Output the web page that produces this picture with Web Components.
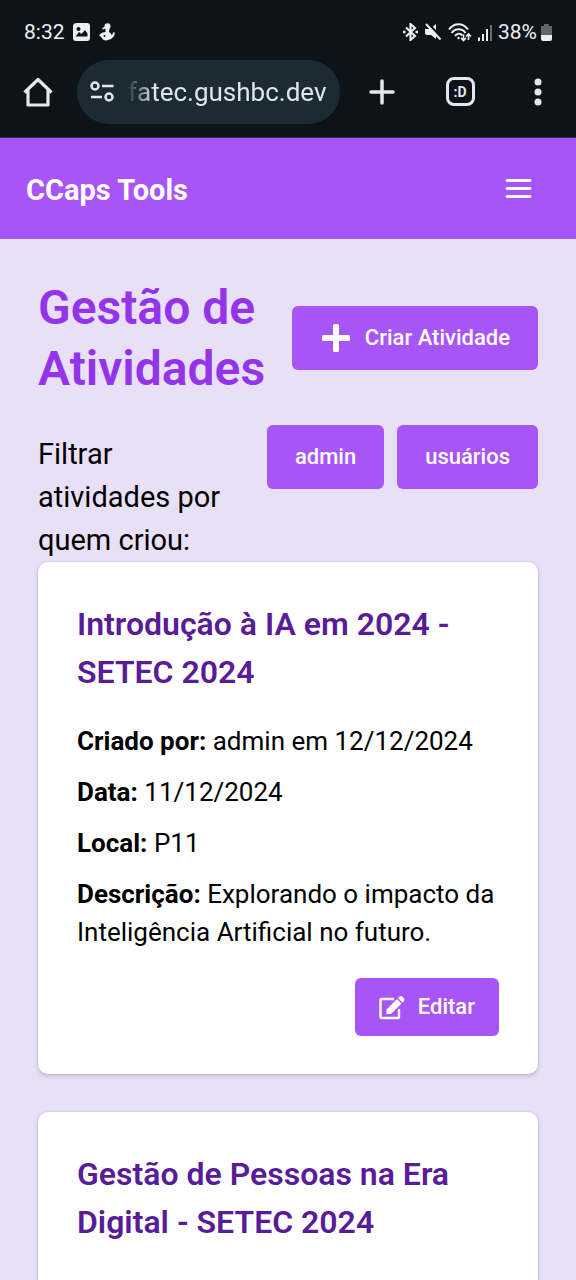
<!DOCTYPE html>
<html lang="pt-BR">
<head>
<meta charset="utf-8">
<meta name="viewport" content="width=device-width, initial-scale=1">
<title>CCaps Tools</title>
<style>
  body { margin: 0; background: #e8e0f7; font-family: Roboto, "Liberation Sans", sans-serif; color: #000; }
</style>
</head>
<body>
<phone-screen>
  <status-bar slot="chrome"></status-bar>
  <browser-toolbar slot="chrome" url="fatec.gushbc.dev"></browser-toolbar>
  <app-nav slot="chrome">CCaps Tools</app-nav>
  <page-heading>
    Gestão de Atividades
    <action-button slot="action" icon="plus">Criar Atividade</action-button>
  </page-heading>
  <filter-row>
    Filtrar atividades por quem criou:
    <action-button slot="options">admin</action-button>
    <action-button slot="options">usuários</action-button>
  </filter-row>
  <activity-list>
    <activity-card>
      <span slot="title">Introdução à IA em 2024 - SETEC 2024</span>
      <activity-field label="Criado por:">admin em 12/12/2024</activity-field>
      <activity-field label="Data:">11/12/2024</activity-field>
      <activity-field label="Local:">P11</activity-field>
      <activity-field label="Descrição:">Explorando o impacto da Inteligência Artificial no futuro.</activity-field>
      <action-button slot="action" icon="edit" compact>Editar</action-button>
    </activity-card>
    <activity-card>
      <span slot="title">Gestão de Pessoas na Era Digital - SETEC 2024</span>
    </activity-card>
  </activity-list>
</phone-screen>

<script>
const define = (name, html, setup) => {
  const template = document.createElement('template');
  template.innerHTML = html;
  customElements.define(name, class extends HTMLElement {
    constructor() {
      super();
      this.attachShadow({ mode: 'open' }).append(template.content.cloneNode(true));
    }
    connectedCallback() { if (setup) setup(this, this.shadowRoot); }
  });
};

define('phone-screen', `
  <style>
    :host { display: flex; flex-direction: column; height: 100vh; overflow: hidden; }
    header { flex: none; }
    main { flex: 1; min-height: 0; overflow-y: auto; scrollbar-width: none; padding: 38px; box-sizing: border-box; }
  </style>
  <header><slot name="chrome"></slot></header>
  <main><slot></slot></main>
`);

define('status-bar', `
  <style>
    :host { display: flex; align-items: center; justify-content: space-between; height: 60px; padding: 4px 24px 0;
      box-sizing: border-box; background: #0d1419; color: #edf0f2; font-size: 21px; line-height: 24px; }
    div { display: flex; align-items: center; gap: 7px; }
    svg { display: block; flex: none; }
    .end { gap: 5px; }
    .charge { display: flex; align-items: center; gap: 4px; }
  </style>
  <div>
    <span>8:32</span>
    <svg width="20" height="18" viewBox="0 0 20 18"><path fill="currentColor" fill-rule="evenodd" d="M5 0h10q3 0 3 3v12q0 3-3 3H4q-3 0-3-3V3q0-3 4-3zM6.500 4a2 2 0 1 0 .01 0zM3.500 13.500h12v-3L13 7l-3.500 4-2.500-2z"/></svg>
    <svg width="16" height="18" viewBox="0 0 16 18"><g fill="currentColor"><circle cx="8.500" cy="3.200" r="3"/><path d="M3 5.500l4-3 1 2.500-4.500 1.500zM6.500 5.500h4l-.5 3.500q2 1 2.500 3 1.500-.5 1.500-2.500l1.500-.5c1 4.500-3 8-8 8.500-3 0-4-1-5-3L0 12l3.500-2.500 3-.5z"/></g><circle cx="5.500" cy="13" r="1" fill="#0d1419"/></svg>
  </div>
  <div class="end">
    <svg width="17" height="18" viewBox="0 0 17 18" fill="none" stroke="currentColor" stroke-width="2.100"><path d="M4 4.500l9 8.500-4.500 4V1L13 5l-9 8.500"/><path d="M1 9h2.500M13.500 9H16" stroke-width="2.600"/></svg>
    <svg width="18" height="18" viewBox="0 0 18 18"><path fill="currentColor" d="M1 6h5l6-5v15l-5-4H3q-2 0-2-2z"/><path d="M4 0l14 15.500" stroke="#0d1419" stroke-width="2.200"/><path d="M2 1L16.500 16.500" stroke="currentColor" stroke-width="2"/></svg>
    <svg width="25" height="19" viewBox="0 0 25 19" fill="none" stroke="currentColor" stroke-width="2"><path d="M2 6.500C7-.5 16-.5 21 6.500M4.500 10c4-5 10.500-5 14 0M8 13c2-2.800 5.500-2.800 7.500-.5"/><circle cx="11.500" cy="15" r="1.200" fill="currentColor" stroke="none"/><path d="M16.500 11.500v6m-2.500-2.500l2.500 2.500 2.500-2.500M21.500 17v-6M19 13.500l2.500-2.500 2.500 2.500" stroke-width="1.600"/></svg>
    <svg width="16" height="17" viewBox="0 0 16 17" stroke="currentColor" stroke-width="2"><path d="M2 13.500V17M6 10V17M10 5V17"/><path d="M14 1V17" opacity=".4"/></svg>
    <div class="charge">
      <span>38%</span>
      <svg width="11" height="17" viewBox="0 0 11 17"><path fill="#60656a" d="M3 0h5v2h3v10H0V2h3z"/><path fill="currentColor" d="M0 11h11v4q0 2-2 2H2q-2 0-2-2z"/></svg>
    </div>
  </div>
`);

define('browser-toolbar', `
  <style>
    :host { display: flex; align-items: center; gap: 23px; height: 78px; padding: 0 22px 14px 22px; box-sizing: border-box;
      background: #0d1419; color: #e3e8ee; border-bottom: 1px solid #30303c; }
    button { display: grid; place-items: center; width: 32px; height: 32px; padding: 0; border: 0; background: none; color: inherit; font: inherit; }
    svg { display: block; flex: none; }
    label { flex: 1; min-width: 0; display: flex; align-items: center; gap: 12px; height: 64px; padding: 0 10px 0 13px;
      box-sizing: border-box; border-radius: 32px; background: #1c2a33; }
    input { flex: 1; min-width: 0; width: 0; padding: 0; border: 0; outline: 0; background: none; color: #dfe7ee;
      font: 26px "Roboto", sans-serif; -webkit-mask: linear-gradient(90deg, #0001, #000 26px); mask: linear-gradient(90deg, #0001, #000 26px); }
    nav { display: flex; gap: 46px; padding-left: 3px; }
    .tabs { display: grid; place-items: center; width: 29px; height: 29px; box-sizing: border-box; border: 3px solid; border-radius: 8px;
      font-size: 14px; line-height: 16px; font-weight: 700; }
  </style>
  <button aria-label="Início"><svg width="30" height="30" viewBox="0 0 30 30" fill="none" stroke="currentColor" stroke-width="3.200" stroke-linejoin="round"><path d="M1.500 15.500L15 2.500l13.500 13M5 13v15h20V13" /></svg></button>
  <label>
    <svg width="26" height="24" viewBox="0 0 26 24" fill="none" stroke="currentColor" stroke-width="2.500"><circle cx="5" cy="6" r="3.500"/><circle cx="19" cy="17" r="3.500"/><path d="M12 6h11.500M1 17h11"/></svg>
    <input type="text" aria-label="Endereço">
  </label>
  <nav>
    <button aria-label="Nova guia"><svg width="28" height="28" viewBox="0 0 28 28" stroke="currentColor" stroke-width="3.500" stroke-linecap="round"><path d="M14 3v22M3 14h22"/></svg></button>
    <button><span class="tabs">:D</span></button>
    <button aria-label="Menu"><svg width="8" height="28" viewBox="0 0 8 28" fill="currentColor"><circle cx="4" cy="4" r="3.500"/><circle cx="4" cy="14" r="3.500"/><circle cx="4" cy="24" r="3.500"/></svg></button>
  </nav>
`, (el, root) => { root.querySelector('input').value = el.getAttribute('url'); });

define('app-nav', `
  <style>
    :host { display: flex; align-items: center; justify-content: space-between; height: 101px; padding: 0 38px 0 26px;
      box-sizing: border-box; background: #a855f7; color: #fff; }
    a { color: inherit; text-decoration: none; padding-top: 3px; font-size: 29px; line-height: 43px; font-weight: 700; }
    button { display: grid; place-items: center; width: 38px; height: 38px; padding: 0; border: 0; background: none; color: inherit; }
    svg { display: block; }
  </style>
  <a href="#"><slot></slot></a>
  <button aria-label="Abrir menu"><svg width="38" height="38" viewBox="0 0 38 38" stroke="currentColor" stroke-width="2.800" stroke-linecap="round"><path d="M7 10.500h23M7 18.500h23M7 26.500h23"/></svg></button>
`);

define('page-heading', `
  <style>
    :host { display: flex; align-items: center; justify-content: space-between; gap: 16px; margin-bottom: 26px; }
    h1 { margin: 0; flex: 1; min-width: 0; color: #9333ea; font-size: 48px; line-height: 61px; font-weight: 600; }
  </style>
  <h1><slot></slot></h1>
  <slot name="action"></slot>
`);

define('filter-row', `
  <style>
    :host { display: flex; align-items: flex-start; justify-content: space-between; gap: 26px; }
    p { flex: 1; margin: 0; padding-top: 8px; font-size: 29px; line-height: 43px; }
    div { display: flex; gap: 13px; }
  </style>
  <p><slot></slot></p>
  <div><slot name="options"></slot></div>
`);

define('activity-list', `
  <style>
    :host { display: flex; flex-direction: column; gap: 38px; }
  </style>
  <slot></slot>
`);

define('activity-card', `
  <style>
    :host { display: block; padding: 38px 39px; background: #fff; border-radius: 10px;
      box-shadow: 0 2px 5px rgba(0, 0, 0, .16), 0 0 2px rgba(0, 0, 0, .12); }
    h2 { margin: 0 0 26px; color: #581c98; font-size: 32px; line-height: 48px; font-weight: 600; }
    .fields { display: flex; flex-direction: column; gap: 13px; }
    footer { display: flex; justify-content: flex-end; }
    ::slotted(action-button) { margin-top: 27px; }
  </style>
  <article>
    <h2><slot name="title"></slot></h2>
    <div class="fields"><slot></slot></div>
    <footer><slot name="action"></slot></footer>
  </article>
`);

define('activity-field', `
  <style>
    :host { display: block; font-size: 26px; line-height: 38px; }
    p { margin: 0; }
    b { font-weight: 700; }
  </style>
  <p><b></b> <slot></slot></p>
`, (el, root) => { root.querySelector('b').textContent = el.getAttribute('label'); });

const icons = {
  plus: '<svg width="32" height="32" viewBox="0 0 32 32" fill="currentColor"><rect x="13" y="2" width="6" height="28" rx="1.500"/><rect x="2" y="13" width="28" height="6" rx="1.500"/></svg>',
  edit: '<svg width="26" height="26" viewBox="0 0 26 26"><path d="M15 5H2.500q-1 0-1 1v17q0 1 1 1H19q1 0 1-1V15" fill="none" stroke="currentColor" stroke-width="2.400"/><path fill="currentColor" d="M7.500 15.500L18 5l4.500 4.500L12 20H7.500zM19 4l1.500-1.500q1.300-1 2.600 0l1.900 1.900q1 1.300 0 2.600L23.500 8.500z"/></svg>'
};

define('action-button', `
  <style>
    :host { display: block; flex: none; }
    button { display: flex; align-items: center; gap: 13px; height: 64px; padding: 0 28px; border: 0; border-radius: 6px;
      background: #a855f7; color: #fff; font: 500 22px/32px Roboto, "Liberation Sans", sans-serif; white-space: nowrap; }
    :host([compact]) button { height: 58px; padding: 0 24px; gap: 13px; }
    i { display: contents; }
    svg { display: block; flex: none; }
  </style>
  <button type="button"><i></i><slot></slot></button>
`, (el, root) => { root.querySelector('i').innerHTML = icons[el.getAttribute('icon')] || ''; });
</script>
</body>
</html>
